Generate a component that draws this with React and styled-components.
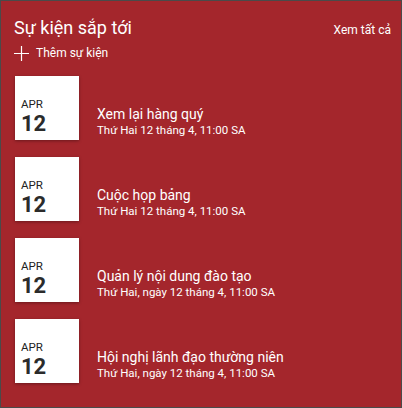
import React from "react";
import styled, { createGlobalStyle } from "styled-components";

const GlobalStyle = createGlobalStyle`
  html, body {
    margin: 0;
    padding: 0;
  }
  body {
    font-family: Roboto, "Noto Sans", "Liberation Sans", sans-serif;
  }
`;

const Panel = styled.div`
  box-sizing: border-box;
  width: 402px;
  height: 408px;
  background-color: #a4262c;
  border: 1px solid #4a4a4a;
  color: white;
  padding: 14px 10px 0 13px;
  display: flex;
  flex-direction: column;
`;

const Header = styled.div`
  display: flex;
  align-items: baseline;
  justify-content: space-between;
`;

const Title = styled.h2`
  margin: 0;
  font-size: 18px;
  font-weight: 400;
  line-height: 26px;
`;

const SeeAll = styled.a`
  font-size: 12px;
  color: white;
  text-decoration: none;
`;

const AddButton = styled.div`
  display: flex;
  align-items: center;
  gap: 7px;
  margin-top: 2px;
  font-size: 12px;
  line-height: 20px;
`;

const EventList = styled.div`
  display: flex;
  flex-direction: column;
  gap: 17px;
  margin-top: 13px;
  padding-left: 1px;
`;

const EventRow = styled.div`
  display: flex;
  align-items: flex-start;
  gap: 18px;
`;

const DateCard = styled.div`
  box-sizing: border-box;
  width: 64px;
  height: 64px;
  background: white;
  box-shadow: 0 1px 3px rgba(0, 0, 0, 0.35);
  padding: 21px 0 0 6px;
  display: flex;
  flex-direction: column;
`;

const Month = styled.span`
  font-size: 11.5px;
  line-height: normal;
  color: #222;
`;

const Day = styled.span`
  font-size: 22px;
  font-weight: 700;
  line-height: normal;
  color: #2b2b2b;
`;

const EventText = styled.div`
  display: flex;
  flex-direction: column;
  padding-top: 30px;
`;

const EventName = styled.span`
  font-size: 14px;
  line-height: 17px;
`;

const EventDate = styled.span`
  font-size: 11.5px;
  line-height: 14px;
`;

const PlusIcon = () => (
  <svg width="15" height="15" viewBox="0 0 15 15">
    <path d="M7.5 0v15M0 7.5h15" stroke="white" strokeWidth="1.2" fill="none" />
  </svg>
);

const events = [
  { name: "Xem lại hàng quý", date: "Thứ Hai 12 tháng 4, 11:00 SA" },
  { name: "Cuộc họp bảng", date: "Thứ Hai 12 tháng 4, 11:00 SA" },
  { name: "Quản lý nội dung đào tạo", date: "Thứ Hai, ngày 12 tháng 4, 11:00 SA" },
  { name: "Hội nghị lãnh đạo thường niên", date: "Thứ Hai, ngày 12 tháng 4, 11:00 SA" },
];

export default function App() {
  return (
    <>
      <GlobalStyle />
      <Panel>
        <Header>
          <Title>Sự kiện sắp tới</Title>
          <SeeAll href="#">Xem tất cả</SeeAll>
        </Header>
        <AddButton>
          <PlusIcon />
          <span>Thêm sự kiện</span>
        </AddButton>
        <EventList>
          {events.map((ev) => (
            <EventRow key={ev.name}>
              <DateCard>
                <Month>APR</Month>
                <Day>12</Day>
              </DateCard>
              <EventText>
                <EventName>{ev.name}</EventName>
                <EventDate>{ev.date}</EventDate>
              </EventText>
            </EventRow>
          ))}
        </EventList>
      </Panel>
    </>
  );
}
